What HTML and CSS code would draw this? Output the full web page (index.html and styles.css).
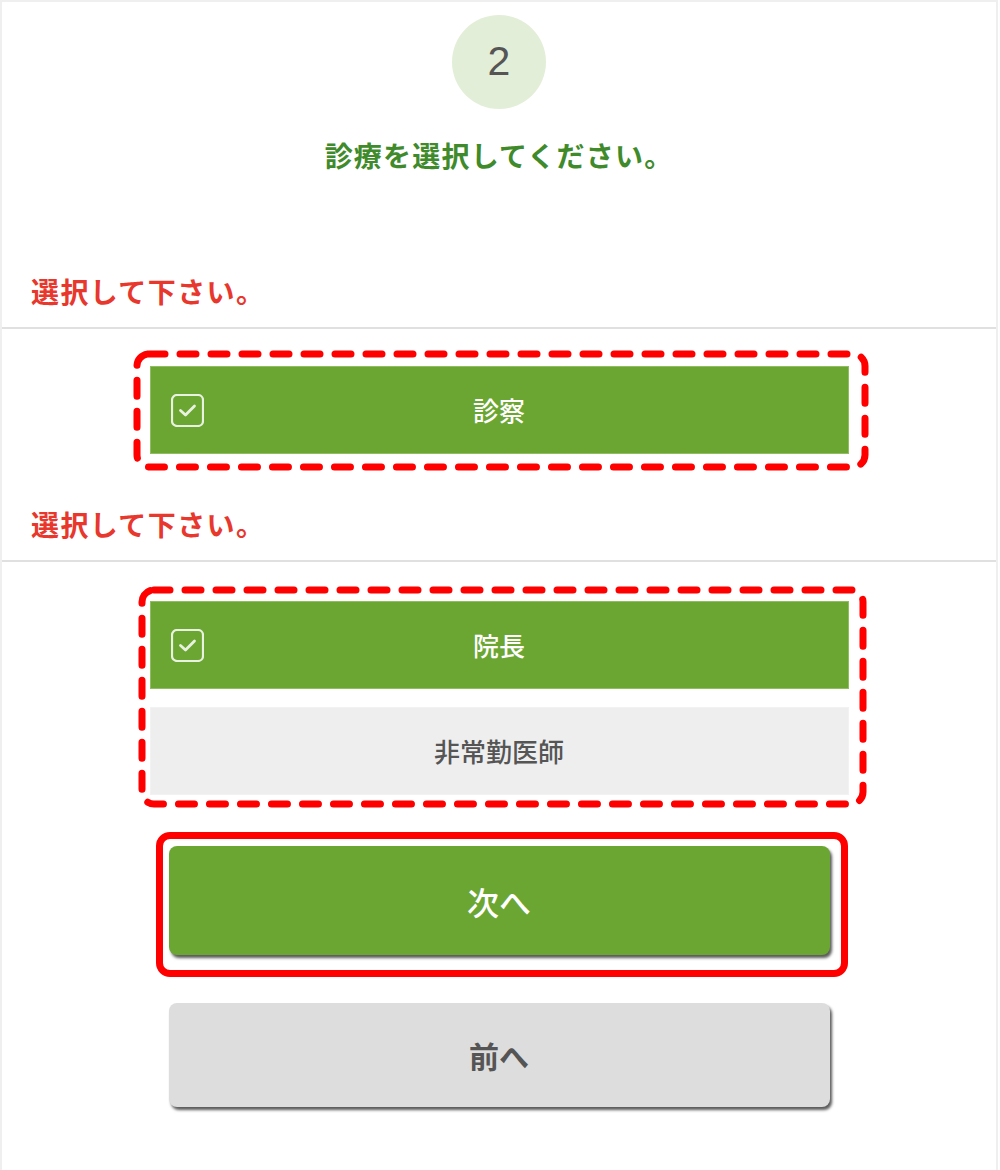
FILE: index.html
```html
<!DOCTYPE html>
<html lang="ja">
<head>
<meta charset="utf-8">
<title>診療を選択してください。</title>
<link rel="stylesheet" href="styles.css">
</head>
<body>
<div class="page">
  <header class="step">
    <div class="step-num">2</div>
    <h1 class="step-title">診療を選択してください。</h1>
  </header>

  <section class="field field-first">
    <p class="error">選択して下さい。</p>
    <div class="options-area">
      <div class="options options-a">
        <svg class="dash-frame" aria-hidden="true"><rect x="0" y="0" width="100%" height="100%" rx="12" ry="12"/></svg>
        <div class="option selected">
          <svg class="check" viewBox="0 0 33 33" aria-hidden="true"><rect x="1" y="1" width="31" height="31" rx="5"/><path d="M9.5 16.5 L14.5 21 L23.5 12"/></svg>
          <span class="option-label">診察</span>
          <span></span>
        </div>
      </div>
    </div>
  </section>

  <section class="field">
    <p class="error">選択して下さい。</p>
    <div class="options-area">
      <div class="options options-b">
        <svg class="dash-frame" aria-hidden="true"><rect x="0" y="0" width="100%" height="100%" rx="12" ry="12"/></svg>
        <div class="option selected">
          <svg class="check" viewBox="0 0 33 33" aria-hidden="true"><rect x="1" y="1" width="31" height="31" rx="5"/><path d="M9.5 16.5 L14.5 21 L23.5 12"/></svg>
          <span class="option-label">院長</span>
          <span></span>
        </div>
        <div class="option">
          <span></span>
          <span class="option-label">非常勤医師</span>
          <span></span>
        </div>
      </div>
    </div>
  </section>

  <div class="actions">
    <div class="callout">
      <button class="btn btn-next" type="button">次へ</button>
    </div>
    <button class="btn btn-prev" type="button">前へ</button>
  </div>
</div>
</body>
</html>
```

FILE: styles.css
```css
* { box-sizing: border-box; }

html, body {
  margin: 0;
  padding: 0;
  background: #ffffff;
}

body {
  font-family: "Noto Sans CJK JP", "Liberation Sans", sans-serif;
  color: #555555;
}

.page {
  width: 998px;
  min-height: 1170px;
  border: 2px solid #efefef;
  border-bottom: none;
}

/* header */
.step {
  display: flex;
  flex-direction: column;
  align-items: center;
  padding-top: 13px;
}

.step-num {
  width: 94px;
  height: 94px;
  border-radius: 50%;
  background: #e3eed8;
  color: #555555;
  font-family: "Liberation Sans", "Noto Sans", sans-serif;
  font-size: 41px;
  line-height: 1;
  display: flex;
  align-items: center;
  justify-content: center;
  padding-bottom: 2px;
}

.step-title {
  margin: 28px 0 0;
  font-size: 28px;
  line-height: 36px;
  font-weight: 700;
  color: #3f8b2c;
  letter-spacing: 1.2px;
}

.error {
  margin: 0;
  padding: 0 0 18px 29px;
  font-size: 28px;
  line-height: 36px;
  font-weight: 700;
  color: #e8372c;
  letter-spacing: 1.4px;
  border-bottom: 2px solid #e0e0e0;
}

.field-first .error {
  margin-top: 100px;
}

.field + .field .error {
  margin-top: 52px;
}

.options-area {
  display: flex;
  justify-content: center;
}

.options-a {
  margin-top: 37px;
}

.options-b {
  margin-top: 39px;
}

.options {
  position: relative;
  width: 699px;
  display: flex;
  flex-direction: column;
  gap: 18px;
}

.dash-frame {
  position: absolute;
  overflow: visible;
  pointer-events: none;
}

.options-a .dash-frame {
  left: -12.5px;
  top: -12.5px;
  width: calc(100% + 29px);
  height: calc(100% + 25px);
}

.options-b .dash-frame {
  left: -7.5px;
  top: -11.5px;
  width: calc(100% + 22px);
  height: calc(100% + 20px);
}

.dash-frame rect {
  fill: none;
  stroke: #ff0000;
  stroke-width: 7;
  stroke-dasharray: 16 15;
  stroke-linecap: round;
}

.option {
  height: 88px;
  display: grid;
  grid-template-columns: 1fr auto 1fr;
  align-items: center;
  padding: 0 20px;
  background: #eeeeee;
  border: 1px solid #f2f2f2;
  color: #555555;
}

.option.selected {
  background: #6ca632;
  border-color: #8fbd5f;
  color: #ffffff;
}

.option-label {
  font-size: 26px;
  line-height: 1;
  font-weight: 500;
}

.check {
  width: 33px;
  height: 33px;
  justify-self: start;
}

.check rect,
.check path {
  fill: none;
  stroke: rgba(255, 255, 255, 0.85);
  stroke-width: 2.2;
  stroke-linecap: round;
  stroke-linejoin: round;
}

.check path {
  stroke-width: 2.8;
}

/* buttons */
.actions {
  display: flex;
  flex-direction: column;
  align-items: center;
  padding-top: 51px;
}

.callout {
  position: relative;
}

.callout::after {
  content: "";
  position: absolute;
  left: -13px;
  right: -18px;
  top: -14px;
  bottom: -22px;
  border: 7px solid #ff0000;
  border-radius: 14px;
  pointer-events: none;
}

.btn {
  display: flex;
  align-items: center;
  justify-content: center;
  width: 661px;
  border: none;
  border-radius: 8px;
  font-family: "Noto Sans CJK JP", "Liberation Sans", sans-serif;
  box-shadow: 2px 3px 3px rgba(0, 0, 0, 0.65);
  padding: 0;
}

.btn-next {
  height: 109px;
  background: #6ca632;
  color: #ffffff;
  font-size: 32px;
  font-weight: 500;
}

.btn-prev {
  margin-top: 48px;
  height: 104px;
  background: #dddddd;
  color: #555555;
  font-size: 30px;
  font-weight: 700;
}
```
